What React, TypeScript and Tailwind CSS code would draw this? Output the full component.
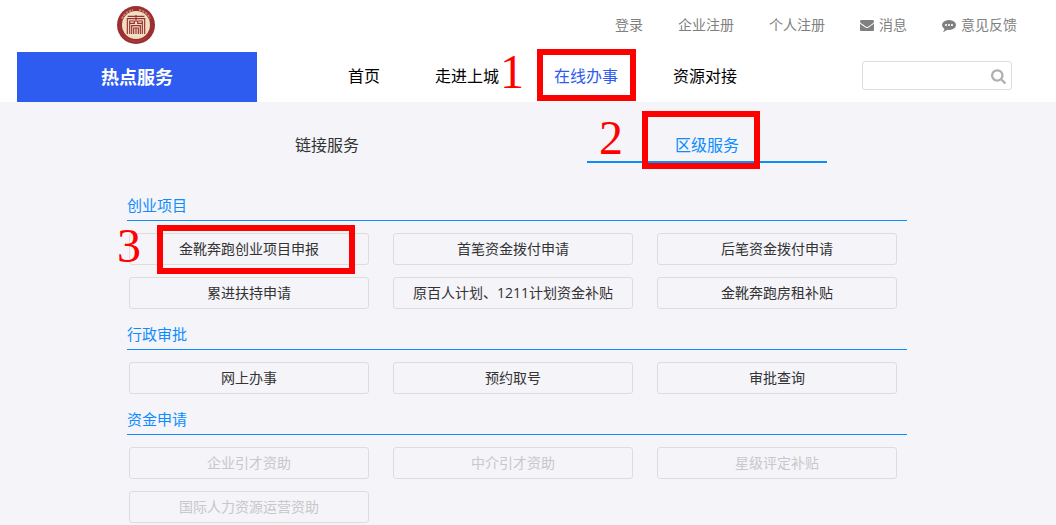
import { useState } from "react";
import clsx from "clsx";

type Service = { name: string; disabled?: boolean; step?: number };
type Group = { title: string; items: Service[] };

const groups: Group[] = [
    {
        title: "创业项目",
        items: [
            { name: "金靴奔跑创业项目申报", step: 3 },
            { name: "首笔资金拨付申请" },
            { name: "后笔资金拨付申请" },
            { name: "累进扶持申请" },
            { name: "原百人计划、1211计划资金补贴" },
            { name: "金靴奔跑房租补贴" },
        ],
    },
    {
        title: "行政审批",
        items: [{ name: "网上办事" }, { name: "预约取号" }, { name: "审批查询" }],
    },
    {
        title: "资金申请",
        items: [
            { name: "企业引才资助", disabled: true },
            { name: "中介引才资助", disabled: true },
            { name: "星级评定补贴", disabled: true },
            { name: "国际人力资源运营资助", disabled: true },
        ],
    },
];

const menu = ["首页", "走进上城", "在线办事", "资源对接"];
const tabs = ["链接服务", "区级服务"];

function Logo() {
    return (
        <svg viewBox="0 0 114 114" className="size-[38px]" aria-hidden="true">
            <circle cx="57" cy="57" r="57" fill="#9c3030" />
            <circle cx="57" cy="57" r="42" fill="#efe0c4" />
            <path d="M15 38A46 46 0 0 1 48 12" fill="none" stroke="#c58078" strokeWidth="6" strokeDasharray="7 3" />
            <path d="M66 12A46 46 0 0 1 99 38" fill="none" stroke="#c58078" strokeWidth="6" strokeDasharray="7 3" />
            <path d="M22 91A49 49 0 0 0 92 91" fill="none" stroke="#b05550" strokeWidth="3" strokeDasharray="3 2" />
            <g fill="none" stroke="#9c3030" strokeWidth="3.5">
                <path d="M57 27V48M32 31H82M31 84V38H83V84" />
                <path d="M38 84V45H52V52H38M76 84V45H62V52H76" />
                <path d="M44 84V59H70V84M50 84V66H64V84M57 66V84" />
            </g>
        </svg>
    );
}

function Icon({ name, className }: { name: "envelope" | "comment" | "search"; className?: string }) {
    const paths = {
        envelope:
            "M1792 710v794q0 66-47 113t-113 47h-1472q-66 0-113-47t-47-113v-794q44 49 101 87 362 246 497 345 57 42 92.5 65.500t94.500 48 110 24.500h2q51 0 110-24.500t94.500-48 92.500-65.500q170-123 498-345 57-39 100-87zm0-294q0 79-49 151t-122 123q-376 261-468 325-10 7-42.500 31t-54 38.800-52 33.200-57.500 27-50 9h-2q-23 0-50-9t-57.500-27-52-33.200-54-38.800-42.500-31q-91-64-262-182.500t-205-142.500q-62-42-117-115.500t-55-136.500q0-78 41.500-130t118.500-52h1472q65 0 112.500 47t47.500 113z",
        comment:
            "M640 896q0-53-37.500-90.500t-90.500-37.500-90.500 37.500-37.500 90.500 37.500 90.500 90.500 37.500 90.500-37.500 37.500-90.500zm384 0q0-53-37.500-90.500t-90.500-37.500-90.500 37.500-37.500 90.500 37.500 90.500 90.500 37.500 90.500-37.500 37.500-90.500zm384 0q0-53-37.500-90.500t-90.500-37.500-90.500 37.500-37.500 90.500 37.500 90.500 90.500 37.500 90.500-37.500 37.500-90.500zm384 0q0 174-120 321.500t-326 233-450 85.500q-110 0-211-18-173 173-435 229-52 10-86 13-12 1-22-6t-13-18q-4-15 20-37 5-5 23.500-21.500t25.500-23.500 23.500-25.500 24-31.500 20.500-37 20-48 14.500-57.500 12.500-72.500q-146-90-229.500-216.500t-83.500-269.500q0-174 120-321.500t326-233 450-85.500 450 85.500 326 233 120 321.500z",
        search:
            "M1152 832q0-185-131.500-316.500t-316.500-131.500-316.500 131.500-131.500 316.500 131.500 316.500 316.500 131.500 316.500-131.500 131.500-316.500zm512 832q0 52-38 90t-90 38q-54 0-90-38l-343-342q-179 124-399 124-143 0-273.500-55.500t-225-150-150-225-55.500-273.500 55.500-273.500 150-225 225-150 273.500-55.500 273.500 55.500 225 150 150 225 55.500 273.500q0 220-124 399l343 343q37 37 37 90z",
    };
    return (
        <svg viewBox="0 0 1792 1792" fill="currentColor" className={className} aria-hidden="true">
            <path d={paths[name]} />
        </svg>
    );
}

// red frame and number that mark a step of the guide
function StepMark({ step, frame, label }: { step: number; frame: string; label: string }) {
    return (
        <>
            <span className={clsx("pointer-events-none absolute z-10 border-6 border-[#fe0000]", frame)} />
            <span
                className={clsx(
                    "pointer-events-none absolute z-10 font-['Liberation_Serif',serif] text-5xl leading-8 font-normal text-[#fe0000]",
                    label
                )}
            >
                {step}
            </span>
        </>
    );
}

function Header() {
    return (
        <header className="bg-white pr-[39px] pl-[17px]">
            <div className="mx-auto max-w-[1000px]">
                <div className="flex h-[50px] items-center justify-between pl-[100px]">
                    <a href="#" aria-label="首页">
                        <Logo />
                    </a>
                    <nav className="flex gap-[35px] text-sm text-[#808080]">
                        <a href="#">登录</a>
                        <a href="#">企业注册</a>
                        <a href="#">个人注册</a>
                        <a href="#" className="flex items-center gap-[5px]">
                            <Icon name="envelope" className="size-3.5" />
                            消息
                        </a>
                        <a href="#" className="flex items-center gap-[5px]">
                            <Icon name="comment" className="size-3.5" />
                            意见反馈
                        </a>
                    </nav>
                </div>
                <div className="mt-0.5 flex h-[50px]">
                    <button className="w-60 bg-[#2e5cf0] text-lg font-bold text-white">热点服务</button>
                    <div className="flex flex-1 items-center pr-[5px] pb-[3px] pl-[91px]">
                        <nav className="flex gap-[55px] text-base text-black">
                            {menu.map((item) => (
                                <a
                                    key={item}
                                    href="#"
                                    className={clsx("relative", item === "在线办事" && "text-[#2e5cf0]")}
                                >
                                    {item}
                                    {item === "在线办事" && (
                                        <StepMark step={1} frame="-left-[17px] -right-[18px] -top-[15px] -bottom-[13px]" label="-left-[54px] -top-2" />
                                    )}
                                </a>
                            ))}
                        </nav>
                        <form className="ml-auto flex h-[29px] w-[150px] items-center rounded-[3px] border border-[#dddddd] pr-1">
                            <input type="text" aria-label="搜索" className="h-full min-w-0 flex-1 px-2 text-sm outline-none" />
                            <button type="button" aria-label="搜索" className="text-[#b0b0b0]">
                                <Icon name="search" className="size-4" />
                            </button>
                        </form>
                    </div>
                </div>
            </div>
        </header>
    );
}

function ServiceGroup({ title, items }: Group) {
    return (
        <section className="mb-3.5">
            <h2 className="border-b border-[#0c8cff] pb-1 text-[15px] leading-[22px] text-[#0c8cff]">{title}</h2>
            <div className="mt-3 grid grid-cols-3 gap-x-6 gap-y-3 pr-2.5 pl-0.5">
                {items.map((item) => (
                    <button
                        key={item.name}
                        disabled={item.disabled}
                        className="relative h-8 rounded-[3px] border border-[#dddddd] text-sm text-[#333333] disabled:text-[#c8c8c8]"
                    >
                        {item.name}
                        {item.step && (
                            <StepMark step={item.step} frame="-top-[9px] -bottom-2.5 left-[27px] right-[13px]" label="-left-[13px] -top-1" />
                        )}
                    </button>
                ))}
            </div>
        </section>
    );
}

export default function App() {
    const [tab, setTab] = useState("区级服务");

    return (
        <div className="min-h-screen bg-[#f4f4f9] font-['Open_Sans','Noto_Sans_CJK_SC',sans-serif]">
            <Header />
            <main className="pr-[39px] pl-[17px]">
                <div className="mx-auto max-w-[780px]">
                    <div role="tablist" className="flex justify-between px-20 pt-[31px]">
                        {tabs.map((item) => (
                            <button
                                key={item}
                                role="tab"
                                aria-selected={tab === item}
                                onClick={() => setTab(item)}
                                className={clsx(
                                    "relative w-60 border-b-2 pb-1 text-base leading-6",
                                    tab === item ? "border-[#0c8cff] text-[#0c8cff]" : "border-transparent text-[#333333]"
                                )}
                            >
                                {item}
                                {item === "区级服务" && (
                                    <StepMark step={2} frame="-top-[22px] -bottom-2 left-[55px] right-[67px]" label="left-3 -top-[11px]" />
                                )}
                            </button>
                        ))}
                    </div>
                    <div className="pt-[31px]">
                        {groups.map((group) => (
                            <ServiceGroup key={group.title} {...group} />
                        ))}
                    </div>
                </div>
            </main>
        </div>
    );
}
